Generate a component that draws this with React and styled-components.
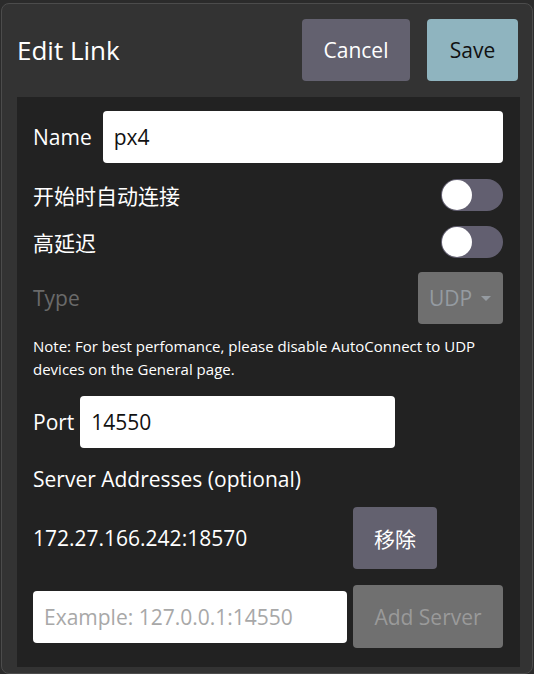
import React, { useState } from "react";
import styled, { createGlobalStyle } from "styled-components";

const GlobalStyle = createGlobalStyle`
  html, body {
    margin: 0;
    padding: 0;
    background: #2b2b2b;
  }
  body {
    font-family: "Open Sans", "Noto Sans CJK SC", sans-serif;
  }
`;

const Dialog = styled.div`
  box-sizing: border-box;
  margin: 3px 0 0 1px;
  width: 532px;
  height: 671px;
  background: #333333;
  border: 1px solid #4c4c4c;
  border-radius: 8px;
  padding: 15px 12px 6px 15px;
  display: flex;
  flex-direction: column;
  gap: 16px;
`;

const Header = styled.div`
  display: flex;
  align-items: center;
  gap: 17px;
  height: 62px;
  padding-right: 2px;
`;

const Title = styled.h1`
  flex: 1;
  margin: 0;
  font-size: 26px;
  font-weight: 400;
  color: #ffffff;
`;

const Button = styled.button`
  box-sizing: border-box;
  width: ${(p) => p.$w}px;
  height: ${(p) => p.$h || 62}px;
  padding: 0;
  border: none;
  border-radius: 4px;
  font-family: "Open Sans", "Noto Sans CJK SC", sans-serif;
  font-size: 21px;
  background: ${(p) => p.$bg || "#63616f"};
  color: ${(p) => p.$fg || "#ffffff"};
  margin-right: ${(p) => p.$mr || 0}px;
  flex-shrink: 0;
`;

const Panel = styled.div`
  box-sizing: border-box;
  width: 503px;
  flex: 1;
  background: #222222;
  padding: 14px 17px 16px 16px;
  display: flex;
  flex-direction: column;
`;

const Row = styled.div`
  display: flex;
  align-items: center;
  gap: ${(p) => p.$gap || 10}px;
  margin-top: ${(p) => p.$mt || 0}px;
  min-height: ${(p) => p.$h || 0}px;
`;

const Label = styled.span`
  font-size: 21px;
  color: ${(p) => (p.$dim ? "#6a6a6a" : "#ffffff")};
  flex: ${(p) => (p.$grow ? 1 : "none")};
  white-space: nowrap;
`;

const Input = styled.input`
  box-sizing: border-box;
  width: ${(p) => (p.$w ? `${p.$w}px` : "auto")};
  flex: ${(p) => (p.$w ? "none" : 1)};
  min-width: 0;
  height: 52px;
  border: none;
  border-radius: 4px;
  background: #ffffff;
  padding: 0 11px;
  font-family: "Open Sans", sans-serif;
  font-size: 21px;
  color: #111111;
  outline: none;
  &::placeholder {
    color: #a8a8a8;
  }
`;

const Track = styled.div`
  box-sizing: border-box;
  width: 62px;
  height: 32px;
  border-radius: 16px;
  background: ${(p) => (p.$on ? "#8fb4bf" : "#625f70")};
  padding: 1px;
  display: flex;
  justify-content: ${(p) => (p.$on ? "flex-end" : "flex-start")};
  cursor: pointer;
`;

const Knob = styled.div`
  width: 30px;
  height: 30px;
  border-radius: 50%;
  background: #ffffff;
`;

const Combo = styled.div`
  box-sizing: border-box;
  width: 85px;
  height: 52px;
  border-radius: 4px;
  background: #6f6f6f;
  color: #959ba1;
  font-size: 21px;
  display: flex;
  align-items: center;
  padding-left: 11px;
  gap: 9px;
`;

const Caret = styled.span`
  width: 0;
  height: 0;
  border-left: 5px solid transparent;
  border-right: 5px solid transparent;
  border-top: 5px solid #959ba1;
`;

const Note = styled.p`
  margin: 11px 0 0;
  font-size: 15px;
  line-height: 23px;
  color: #ffffff;
`;

const Toggle = ({ initial = false }) => {
  const [on, setOn] = useState(initial);
  return (
    <Track $on={on} onClick={() => setOn(!on)}>
      <Knob />
    </Track>
  );
};

export default function App() {
  return (
    <>
      <GlobalStyle />
      <Dialog>
        <Header>
          <Title>Edit Link</Title>
          <Button $w={108}>Cancel</Button>
          <Button $w={91} $bg="#8fb4bf" $fg="#111111">
            Save
          </Button>
        </Header>
        <Panel>
          <Row $gap={11}>
            <Label>Name</Label>
            <Input defaultValue="px4" />
          </Row>
          <Row $mt={16} $h={32}>
            <Label $grow>开始时自动连接</Label>
            <Toggle />
          </Row>
          <Row $mt={15} $h={32}>
            <Label $grow>高延迟</Label>
            <Toggle />
          </Row>
          <Row $mt={14}>
            <Label $grow $dim>
              Type
            </Label>
            <Combo>
              UDP <Caret />
            </Combo>
          </Row>
          <Note>
            Note: For best perfomance, please disable AutoConnect to UDP
            devices on the General page.
          </Note>
          <Row $mt={15} $gap={6}>
            <Label>Port</Label>
            <Input $w={315} defaultValue="14550" />
          </Row>
          <Row $mt={17} $h={28}>
            <Label>Server Addresses (optional)</Label>
          </Row>
          <Row $mt={14} $gap={6}>
            <Label $grow>172.27.166.242:18570</Label>
            <Button $w={84} $mr={66}>
              移除
            </Button>
          </Row>
          <Row $mt={16} $gap={6}>
            <Input $w={314} placeholder="Example: 127.0.0.1:14550" />
            <Button $w={150} $h={63} $bg="#707070" $fg="#9a9a9a" disabled>
              Add Server
            </Button>
          </Row>
        </Panel>
      </Dialog>
    </>
  );
}
